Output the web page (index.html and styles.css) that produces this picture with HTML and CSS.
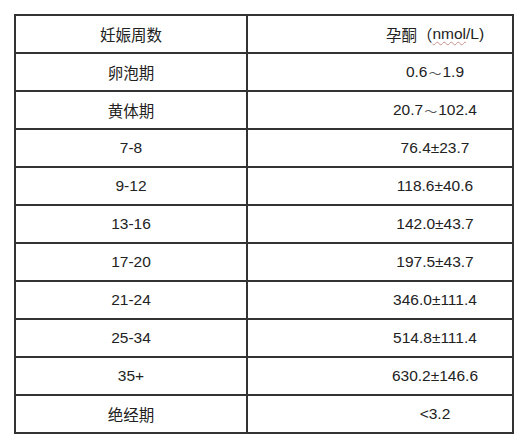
FILE: index.html
```html
<!DOCTYPE html>
<html lang="zh">
<head>
<meta charset="utf-8">
<link rel="stylesheet" href="styles.css">
</head>
<body>
<div class="table">
  <div class="row"><div class="cell left">妊娠周数</div><div class="cell right">孕酮（<span class="squiggle">nmol</span>/L)</div></div>
  <div class="row"><div class="cell left">卵泡期</div><div class="cell right">0.6<span class="tilde">～</span>1.9</div></div>
  <div class="row"><div class="cell left">黄体期</div><div class="cell right">20.7<span class="tilde">～</span>102.4</div></div>
  <div class="row"><div class="cell left">7-8</div><div class="cell right">76.4±23.7</div></div>
  <div class="row"><div class="cell left">9-12</div><div class="cell right">118.6±40.6</div></div>
  <div class="row"><div class="cell left">13-16</div><div class="cell right">142.0±43.7</div></div>
  <div class="row"><div class="cell left">17-20</div><div class="cell right">197.5±43.7</div></div>
  <div class="row"><div class="cell left">21-24</div><div class="cell right">346.0±111.4</div></div>
  <div class="row"><div class="cell left">25-34</div><div class="cell right">514.8±111.4</div></div>
  <div class="row"><div class="cell left">35+</div><div class="cell right">630.2±146.6</div></div>
  <div class="row"><div class="cell left">绝经期</div><div class="cell right">&lt;3.2</div></div>
</div>
</body>
</html>
```

FILE: styles.css
```css
html, body {
  margin: 0;
  padding: 0;
  background: #ffffff;
}
body {
  padding: 14px 0 0 14px;
  font-family: "Liberation Sans", "Noto Sans CJK SC", sans-serif;
  font-size: 15.5px;
  color: #222222;
}
.table {
  box-sizing: border-box;
  width: 500px;
  border: 2px solid #333333;
  display: flex;
  flex-direction: column;
}
.row {
  display: grid;
  grid-template-columns: 232px 1fr;
  height: 36px;
  border-bottom: 2px solid #333333;
}
.row:last-child {
  border-bottom: none;
}
.cell {
  display: flex;
  align-items: center;
  justify-content: center;
  white-space: nowrap;
}
.left {
  border-right: 2px solid #333333;
}
.right {
  padding-left: 110px;
}
.tilde {
  font-family: "Noto Sans CJK SC", sans-serif;
  font-size: 13px;
  color: #555555;
  margin: 0 1px;
}
.squiggle {
  text-decoration: underline wavy rgba(190, 120, 110, 0.8);
  text-decoration-thickness: 1px;
  text-underline-offset: 2px;
}
```
